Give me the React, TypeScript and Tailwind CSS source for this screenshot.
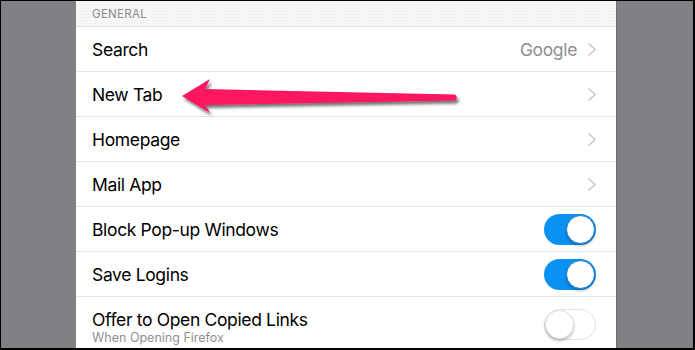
import React from 'react';

type Row = {
  label: string;
  detail?: string;
  sub?: string;
  toggle?: boolean;
  chevron?: boolean;
};

const rows: Row[] = [
  { label: 'Search', detail: 'Google', chevron: true },
  { label: 'New Tab', chevron: true },
  { label: 'Homepage', chevron: true },
  { label: 'Mail App', chevron: true },
  { label: 'Block Pop-up Windows', toggle: true },
  { label: 'Save Logins', toggle: true },
  { label: 'Offer to Open Copied Links', sub: 'When Opening Firefox', toggle: false },
];

function Chevron() {
  return (
    <svg width="9" height="15" viewBox="0 0 9 15" className="ml-[10px]">
      <path d="M1.5 1.5 L8 7.5 L1.5 13.5" fill="none" stroke="#c4c4c8" strokeWidth="1.4" />
    </svg>
  );
}

function Toggle({ on }: { on: boolean }) {
  return (
    <div
      className={
        on
          ? 'relative w-[52px] h-[31px] rounded-full bg-[#0a92f2]'
          : 'relative w-[52px] h-[31px] rounded-full bg-white border border-[#e3e3e6]'
      }
    >
      <div
        className={
          on
            ? 'absolute top-[1px] right-[1px] w-[29px] h-[29px] rounded-full bg-white border border-[#1577c9] shadow-[0_2px_3px_rgba(0,0,0,0.25)]'
            : 'absolute top-0 left-0 w-[29px] h-[29px] rounded-full bg-white border border-[#e0e0e0] shadow-[0_2px_3px_rgba(0,0,0,0.25)]'
        }
      />
    </div>
  );
}

export default function App() {
  return (
    <div className="w-[695px] h-[350px] bg-black pt-px pl-px pr-[2px] pb-[2px] overflow-hidden">
      <div className="flex h-full bg-[#808184]" style={{ fontFamily: 'Inter, "Noto Sans", sans-serif' }}>
        <div className="ml-[75px] w-[541px] h-full bg-white border-r border-[#6d6e71] relative">
          {/* Section header */}
          <div className="h-[26px] bg-[#f7f7f8] bg-[radial-gradient(#ececee_0.6px,transparent_0.7px)] bg-[length:3px_3px] border-b border-[#e2e2e4] pl-4 pt-[2px] flex items-center">
            <span className="text-[11.5px] text-[#8a8a8e] tracking-[0.3px]">GENERAL</span>
          </div>

          {rows.map((row) => (
            <div
              key={row.label}
              className={
                row.sub
                  ? 'h-[55px] border-b border-[#e4e4e6] pl-4 pr-[20px] flex items-center justify-between'
                  : 'h-[45px] border-b border-[#e4e4e6] pl-4 pr-[20px] flex items-center justify-between'
              }
            >
              {row.sub ? (
                <div className="flex flex-col pt-[6px]">
                  <span className="text-[17.5px] leading-[21px] tracking-[-0.35px] text-black">{row.label}</span>
                  <span className="text-[12.5px] leading-[16px] text-[#8e8e93]">{row.sub}</span>
                </div>
              ) : (
                <span className="text-[17.5px] tracking-[-0.35px] text-black pt-[2px]">{row.label}</span>
              )}
              {row.chevron ? (
                <div className="flex items-center">
                  {row.detail && (
                    <span className="text-[17.5px] tracking-[-0.35px] text-[#8e8e93] pt-[2px]">{row.detail}</span>
                  )}
                  <Chevron />
                </div>
              ) : (
                <Toggle on={!!row.toggle} />
              )}
            </div>
          ))}

          {/* Annotation arrow */}
          <svg
            className="absolute left-0 top-0 pointer-events-none"
            width="541"
            height="350"
            viewBox="75 0 541 350"
          >
            <defs>
              <filter id="sh" x="-10%" y="-50%" width="120%" height="200%">
                <feDropShadow dx="2" dy="3" stdDeviation="1.6" floodColor="#000" floodOpacity="0.55" />
              </filter>
            </defs>
            <path
              d="M181 95 L209 78 L204 88 L454 93.5 Q457.5 96.5 454 99.5 L204 104 L209 112 Z"
              fill="#fd1460"
              filter="url(#sh)"
            />
          </svg>
        </div>
      </div>
    </div>
  );
}
